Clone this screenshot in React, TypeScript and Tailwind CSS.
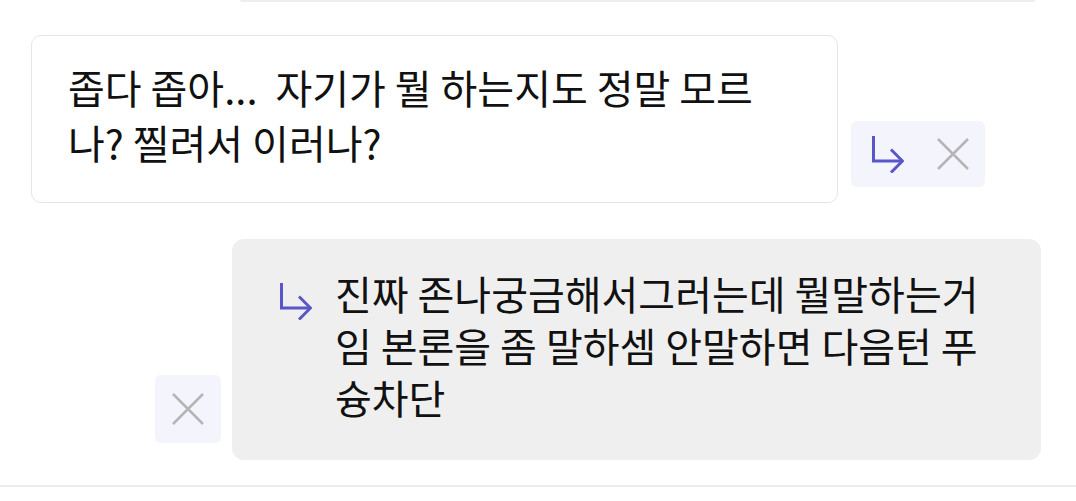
import React from "react";

const font = { fontFamily: '"Noto Sans CJK KR", "Noto Sans", sans-serif' };

function ReplyArrow() {
  return (
    <svg width="33" height="38" viewBox="0 0 33 38" fill="none">
      <path d="M2.5 1 V26 H31" stroke="#5a56c9" strokeWidth="3" strokeLinejoin="miter" />
      <path d="M20 14.5 L31.5 26 L20 37.5" stroke="#5a56c9" strokeWidth="3" strokeLinejoin="miter" />
    </svg>
  );
}

function CloseX() {
  return (
    <svg width="32" height="32" viewBox="0 0 32 32" fill="none">
      <path d="M1 1 L31 31 M31 1 L1 31" stroke="#b5b5b5" strokeWidth="2.5" />
    </svg>
  );
}

export default function App() {
  return (
    <div
      className="w-[1076px] h-[501px] bg-white overflow-hidden flex flex-col text-[#111]"
      style={font}
    >
      <div className="ml-[240px] w-[795px] h-[2px] border-b-2 border-[#eeeeee] rounded-b-[4px]" />

      <div className="mt-[33px] flex items-end gap-[13px] pl-[31px]">
        <div className="w-[807px] h-[168px] border border-[#e6e6e6] rounded-[10px] bg-white pl-[36px] pt-[24px] text-[40px] leading-[55px] whitespace-nowrap">
          <div>좁다 좁아...&nbsp; 자기가 뭘 하는지도 정말 모르</div>
          <div>나? 찔려서 이러나?</div>
        </div>
        <div className="mb-[16px] w-[134px] h-[66px] rounded-[6px] bg-[#f4f4fc] flex items-center pl-[20px] gap-[33px]">
          <ReplyArrow />
          <CloseX />
        </div>
      </div>

      <div className="mt-[36px] flex items-end justify-end gap-[11px] pr-[35px]">
        <div className="mb-[17px] w-[66px] h-[68px] rounded-[6px] bg-[#f4f4fc] flex items-center justify-center">
          <CloseX />
        </div>
        <div className="w-[809px] h-[221px] rounded-[12px] bg-[#efefef] pl-[47px] pt-[28px] flex gap-[23px]">
          <div className="pt-[15px]">
            <ReplyArrow />
          </div>
          <div className="text-[40px] leading-[52px] whitespace-nowrap">
            <div>진짜 존나궁금해서그러는데 뭘말하는거</div>
            <div>임 본론을 좀 말하셈 안말하면 다음턴 푸</div>
            <div>슝차단</div>
          </div>
        </div>
      </div>

      <div className="mt-[25px] h-[2px] bg-[#ececec]" />
    </div>
  );
}
